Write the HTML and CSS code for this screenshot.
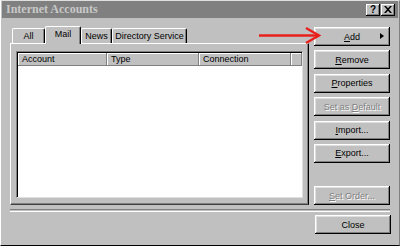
FILE: index.html
```html
<!DOCTYPE html>
<html>

<head>
    <title>Internet Accounts</title>

    <link rel="stylesheet" href="styles.css">
</head>

<body>
    <div class="window">
        <div class="titlebar">
            <span class="title">Internet Accounts</span>
            <div class="caption-btns">
                <span class="cbtn help">?</span>
                <span class="cbtn">
                    <svg width="8" height="7" viewBox="0 0 8 7">
                        <path d="M0 0h2l2 2.2 2-2.2h2l-3 3.5 3 3.5h-2l-2-2.2-2 2.2h-2l3-3.5z" fill="#000" />
                    </svg>
                </span>
            </div>
        </div>

        <div class="main">
            <div class="tabs-area">
                <div class="tabs">
                    <div class="tab tab-all">All</div>
                    <div class="tab tab-mail active">Mail</div>
                    <div class="tab tab-news">News</div>
                    <div class="tab tab-dir">Directory Service</div>
                </div>
                <div class="panel">
                    <div class="listview">
                        <div class="lv-header">
                            <div class="col col-account">Account</div>
                            <div class="col col-type">Type</div>
                            <div class="col col-conn">Connection</div>
                            <div class="col col-rest"></div>
                        </div>
                        <div class="lv-rows"></div>
                    </div>
                </div>
            </div>

            <div class="side">
                <div class="btn btn-add"><span><u>A</u>dd</span><span class="tri"></span></div>
                <div class="btn"><span><u>R</u>emove</span></div>
                <div class="btn"><span><u>P</u>roperties</span></div>
                <div class="btn disabled"><span>Set as <u>D</u>efault</span></div>
                <div class="btn"><span><u>I</u>mport...</span></div>
                <div class="btn"><span><u>E</u>xport...</span></div>
                <div class="btn disabled btn-order"><span><u>S</u>et Order...</span></div>
            </div>
        </div>

        <div class="separator"></div>

        <div class="footer">
            <div class="btn"><span>Close</span></div>
        </div>

        <!-- red pointer drawn over the dialog -->
        <svg class="arrow" width="66" height="20" viewBox="0 0 66 20">
            <path d="M2 9.5H62" stroke="#e8201c" stroke-width="2.4" fill="none" />
            <path d="M49 2L62 9.5 49 17" stroke="#e8201c" stroke-width="2.4" fill="none" />
        </svg>
    </div>
</body>

</html>
```

FILE: styles.css
```css
body {
    margin: 0;
    background-color: #c0c0c0;
    font-family: 'Liberation Sans', Arial, sans-serif;
    font-size: 9px;
    color: #000;
}

.window {
    position: relative;
    width: 400px;
    height: 246px;
    box-sizing: border-box;
    background-color: #c0c0c0;
    border-top: 1px solid #dfdfdf;
    border-left: 1px solid #ffffff;
    border-right: 1px solid #808080;
    border-bottom: 1px solid #000;
    display: flex;
    flex-direction: column;
}

.titlebar {
    height: 17px;
    margin: 0 1px;
    background-color: #808080;
    display: flex;
    align-items: center;
    justify-content: space-between;
    padding: 0 3px 0 4px;
}

.title {
    font-family: 'Liberation Serif', 'Times New Roman', serif;
    font-weight: bold;
    font-size: 12px;
    color: #c8c8c8;
}

.caption-btns {
    display: flex;
    gap: 1px;
}

.cbtn {
    width: 14px;
    height: 12px;
    box-sizing: border-box;
    background-color: #c0c0c0;
    box-shadow: inset -1px -1px #000, inset 1px 1px #fff, inset -2px -2px #808080;
    display: flex;
    align-items: center;
    justify-content: center;
}

.cbtn.help {
    font-weight: bold;
    font-size: 10px;
    line-height: 12px;
}

.main {
    display: flex;
    padding: 8px 0 0 9px;
}

.tabs {
    display: flex;
    align-items: flex-end;
    padding-left: 2px;
    height: 17px;
}

.tab {
    height: 15px;
    box-sizing: border-box;
    padding-top: 2px;
    border-top: 1px solid #fff;
    border-left: 1px solid #fff;
    border-right: 1px solid #000;
    border-radius: 2px 2px 0 0;
    box-shadow: inset -1px 0 #808080;
    line-height: 11px;
    white-space: nowrap;
    text-align: center;
}

.tab-all { width: 33px; }
.tab-mail { width: 36px; }
.tab-news { width: 31px; }
.tab-dir { width: 75px; }

.tab.active {
    height: 18px;
    margin-bottom: -1px;
    padding-top: 2px;
    background-color: #c0c0c0;
    position: relative;
    z-index: 1;
}

.panel {
    width: 299px;
    height: 162px;
    box-sizing: border-box;
    border-top: 1px solid #fff;
    border-left: 1px solid #fff;
    border-right: 1px solid #000;
    border-bottom: 1px solid #404040;
    box-shadow: inset -1px -1px #808080;
    padding: 7px 5px 6px 5px;
}

.listview {
    height: 100%;
    box-sizing: border-box;
    background-color: #fff;
    border-top: 1px solid #808080;
    border-left: 1px solid #808080;
    border-right: 1px solid #dfdfdf;
    border-bottom: 1px solid #dfdfdf;
    box-shadow: inset 1px 1px #000;
    padding: 1px 0 0 1px;
}

.lv-header {
    display: flex;
    height: 13px;
}

.col {
    box-sizing: border-box;
    background-color: #c0c0c0;
    box-shadow: inset -1px -1px #808080, inset 1px 1px #fff;
    padding: 1px 0 0 4px;
    line-height: 11px;
}

.col-account { width: 89px; }
.col-type { width: 92px; }
.col-conn { width: 92px; }
.col-rest { flex: 1; }

.side {
    width: 76px;
    margin: 1px 0 0 5px;
    display: flex;
    flex-direction: column;
    gap: 4.4px;
}

.btn {
    height: 19px;
    box-sizing: border-box;
    background-color: #c0c0c0;
    box-shadow: inset -1px -1px #000, inset 1px 1px #fff, inset -2px -2px #808080, inset 2px 2px #dfdfdf;
    display: flex;
    align-items: center;
    justify-content: center;
    position: relative;
}

.btn.disabled {
    color: #808080;
    text-shadow: 1px 1px #fff;
}

.btn-add .tri {
    position: absolute;
    right: 6px;
    top: 6px;
    width: 0;
    height: 0;
    border-top: 3.5px solid transparent;
    border-bottom: 3.5px solid transparent;
    border-left: 4px solid #000;
}

.btn-order {
    margin-top: auto;
}

.separator {
    margin: 4px 9px 0 9px;
    height: 1px;
    border-top: 1px solid #808080;
    border-bottom: 1px solid #fff;
}

.footer {
    display: flex;
    justify-content: flex-end;
    padding: 3px 8px 0 0;
}

.footer .btn {
    width: 76px;
}

.arrow {
    position: absolute;
    left: 256px;
    top: 25px;
}
```
